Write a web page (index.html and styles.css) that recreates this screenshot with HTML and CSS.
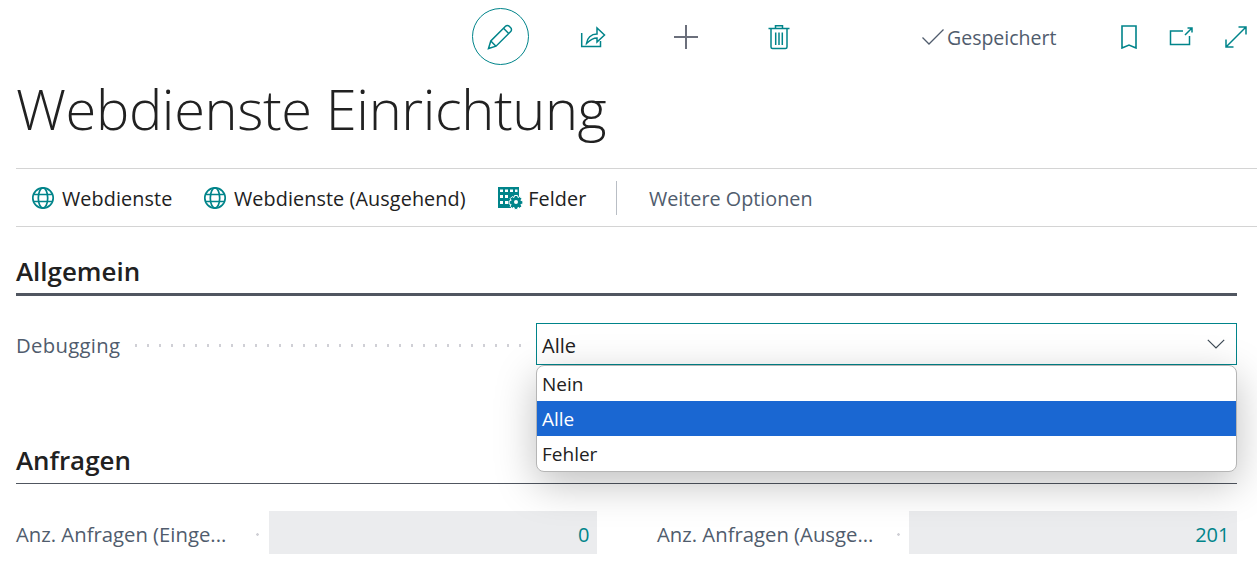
FILE: index.html
```html
<!DOCTYPE html>
<html lang="de">
<head>
<meta charset="utf-8">
<title>Webdienste Einrichtung</title>
<link rel="stylesheet" href="styles.css">
</head>
<body>
<div class="page">
  <header class="topbar">
    <div class="tools">
      <button class="tool tool-active" aria-label="Bearbeiten">
        <svg width="26" height="26" viewBox="0 0 26 26" fill="none" stroke="#00848a" stroke-width="1.5"><path d="M1.500 24.500 3.800 17 18.500 2.300a2.600 2.600 0 0 1 3.700 0l1.500 1.500a2.600 2.600 0 0 1 0 3.700L9 22.200z"/><path d="M3.800 17 9 22.200M16.500 4.300l5.200 5.200"/></svg>
      </button>
      <button class="tool" aria-label="Teilen">
        <svg width="26" height="26" viewBox="0 0 26 26" fill="none" stroke="#00848a" stroke-width="1.5"><path d="M1.700 9V22.500H20.500V17"/><path d="M6.500 19.500C7 14 11 10 17 10V4L24.500 11 17 18V14C13 14 10 16 6.500 19.500Z"/></svg>
      </button>
      <button class="tool" aria-label="Neu">
        <svg width="26" height="26" viewBox="0 0 26 26" fill="none" stroke="#6b6f7b" stroke-width="2"><path d="M13 1v24M1 13h24"/></svg>
      </button>
      <button class="tool" aria-label="Löschen">
        <svg width="26" height="26" viewBox="0 0 26 26" fill="none" stroke="#00848a" stroke-width="1.5"><path d="M2.500 4.500h21M9.500 4.500V1.700h7v2.800M5 4.500V23a1.500 1.500 0 0 0 1.500 1.500h13A1.500 1.500 0 0 0 21 23V4.500M9.700 8.500v12.500M13 8.500v12.500M16.300 8.500v12.500"/></svg>
      </button>
    </div>
    <div class="status">
      <svg width="24" height="18" viewBox="0 0 24 18" fill="none" stroke="#505c6d" stroke-width="1.300"><path d="M1.500 9.500 8 16 22.500 1.500"/></svg>
      <span>Gespeichert</span>
    </div>
    <div class="windowtools">
      <svg width="18" height="24" viewBox="0 0 18 24" fill="none" stroke="#00848a" stroke-width="1.600"><path d="M2 1h14v22l-7-3-7 3z"/></svg>
      <svg width="24" height="20" viewBox="0 0 24 20" fill="none" stroke="#00848a" stroke-width="1.500"><path d="M14 4H1.500v13.500h19V9M16 8l7-7M18.500 1H23v4.500"/></svg>
      <svg width="24" height="24" viewBox="0 0 24 24" fill="none" stroke="#00848a" stroke-width="1.500"><path d="M2 22 22 2M14.500 2H22v7.500M2 14.500V22h7.500"/></svg>
    </div>
  </header>
  <h1 class="title">Webdienste Einrichtung</h1>
  <nav class="actions">
    <a class="action">
      <svg width="24" height="24" viewBox="0 0 24 24" fill="none" stroke="#00848a" stroke-width="1.700"><circle cx="12" cy="12" r="10.200"/><ellipse cx="12" cy="12" rx="4.700" ry="10.200"/><path d="M2.500 8.500h19M2.500 15.500h19"/></svg>
      <span>Webdienste</span>
    </a>
    <a class="action">
      <svg width="24" height="24" viewBox="0 0 24 24" fill="none" stroke="#00848a" stroke-width="1.700"><circle cx="12" cy="12" r="10.200"/><ellipse cx="12" cy="12" rx="4.700" ry="10.200"/><path d="M2.500 8.500h19M2.500 15.500h19"/></svg>
      <span>Webdienste (Ausgehend)</span>
    </a>
    <a class="action">
      <svg class="grid-icon" width="25" height="24" viewBox="0 0 25 24"><path fill="#00848a" d="M0 1h21v11h-6v10H0z"/><path fill="#fff" d="M2 3.500h3V6H2zM7 3.500h3V6H7zM12 3.500h3V6h-3zM17 3.500h2.500V6H17zM2 9h3v3H2zM7 9h3v3H7zM2 15h3v3H2zM7 15h3v3H7z"/><path fill="#00848a" stroke="#fff" d="M16.500 9.500h3l.5 2 1.800-.9 2 2-.9 1.800 2 .6v3l-2 .5.9 1.800-2 2-1.800-.9-.5 2h-3l-.5-2-1.800.9-2-2 .9-1.800-2-.5v-3l2-.6-.9-1.800 2-2 1.800.9z"/><circle cx="18" cy="16" r="2" fill="#fff"/></svg>
      <span>Felder</span>
    </a>
    <i class="divider"></i>
    <a class="action-more">Weitere Optionen</a>
  </nav>
  <main class="content">
    <section class="general">
      <h2 class="section-title">Allgemein</h2>
      <div class="debug-row">
        <label class="field-label">Debugging</label>
        <i class="dots"></i>
        <div class="select-wrap">
          <div class="select">
            <span>Alle</span>
            <svg width="18" height="10" viewBox="0 0 18 10" fill="none" stroke="#3d4a55" stroke-width="1.200"><path d="M.8.800 9 9 17.200.800"/></svg>
          </div>
          <ul class="options">
            <li>Nein</li>
            <li class="selected">Alle</li>
            <li>Fehler</li>
          </ul>
        </div>
      </div>
    </section>
    <section class="requests">
      <h2 class="section-title thin">Anfragen</h2>
      <div class="field-grid">
        <div class="field">
          <label class="field-label">Anz. Anfragen (Einge...</label>
          <i class="dots short"></i>
          <output class="value">0</output>
        </div>
        <div class="field">
          <label class="field-label">Anz. Anfragen (Ausge...</label>
          <i class="dots short"></i>
          <output class="value">201</output>
        </div>
      </div>
    </section>
  </main>
</div>
</body>
</html>
```
FILE: styles.css
```css
* { box-sizing: border-box; }
html, body { margin: 0; height: 100%; overflow: hidden; background: #fff; }
body { font-family: "Open Sans", "Noto Sans", sans-serif; color: #212121; }
.page { width: 1257px; height: 574px; overflow: hidden; padding-left: 16px; }

.topbar { display: flex; align-items: center; height: 72px; }
.tools { display: flex; gap: 36px; margin-left: 456px; }
.tool { width: 57px; height: 57px; display: flex; align-items: center; justify-content: center; padding: 0; background: none; border: 1px solid transparent; border-radius: 50%; }
.tool svg { margin: 2px 2px 0 0; }
.tool-active { border-color: #00848a; }
.status { display: flex; align-items: center; gap: 2px; margin: 2px 0 0 113px; font-size: 19.500px; color: #505c6d; width: 138px; white-space: nowrap; }
.windowtools { display: flex; align-items: center; gap: 31px; margin: 2px 0 0 61px; }

.title { margin: 0; height: 96px; font-size: 56px; font-weight: 300; line-height: 72px; letter-spacing: -.38px; color: #212121; white-space: nowrap; }

.actions { display: flex; align-items: center; height: 59px; border-top: 1px solid #d4d4d4; border-bottom: 1px solid #d4d4d4; padding-left: 15px; font-size: 19.800px; letter-spacing: .1px; }
.action { display: flex; align-items: center; gap: 7px; margin-right: 30.500px; white-space: nowrap; }
.action span, .action-more { padding-top: 2px; }
.grid-icon { margin: 0 -2px 0 2px; }
.divider { width: 1px; height: 34px; background: #b9bec5; margin: 0 32px 0 -1px; }
.action-more { color: #505c6d; white-space: nowrap; letter-spacing: 0; }

.content { width: 1221px; }
.section-title { margin: 0; height: 69px; padding-top: 27px; font-size: 25.900px; font-weight: 600; line-height: 35px; border-bottom: 3px solid #505660; }
.section-title.thin { height: 48px; padding-top: 7px; border-bottom: 1px solid #505660; }

.general { height: 209px; }
.debug-row { display: flex; align-items: flex-start; margin-top: 27px; }
.field-label { flex: none; font-size: 20.300px; line-height: 44px; color: #505c6d; white-space: nowrap; letter-spacing: .3px; }
.dots { flex: 1; height: 3px; margin: 21px 8px 0 10px; background-image: radial-gradient(circle, #d0d0d6 1.200px, transparent 1.500px); background-size: 12px 3px; }
.select-wrap { position: relative; width: 701px; flex: none; }
.select { display: flex; align-items: center; justify-content: space-between; height: 42px; padding: 2px 11px 0 5px; border: 1px solid #00848a; font-size: 20px; }
.select svg { margin-top: -2px; }
.options { position: absolute; z-index: 2; left: 0; right: 0; top: 42px; margin: 0; padding: 0; list-style: none; height: 107px; background: #fff; border: 1px solid #b5b5b5; border-radius: 8px; box-shadow: 0 12px 40px rgba(0, 0, 0, .25); font-size: 19px; overflow: hidden; }
.options li { height: 35px; line-height: 37px; padding-left: 5px; }
.options .selected { background: #1a67d2; color: #fff; }

.field-grid { display: grid; grid-template-columns: 581px 580px; column-gap: 60px; margin-top: 27px; }
.field { display: flex; align-items: flex-start; }
.field .field-label { flex: 0 0 216px; line-height: 46px; letter-spacing: 0; }
.dots.short { flex: 0 0 3px; margin: 22px 0 0 24px; background-size: 3px 3px; }
.value { flex: none; width: 328px; height: 43px; margin-left: auto; padding-right: 7.500px; background: #ebecee; color: #00848a; font-size: 20px; line-height: 47px; text-align: right; }
```
